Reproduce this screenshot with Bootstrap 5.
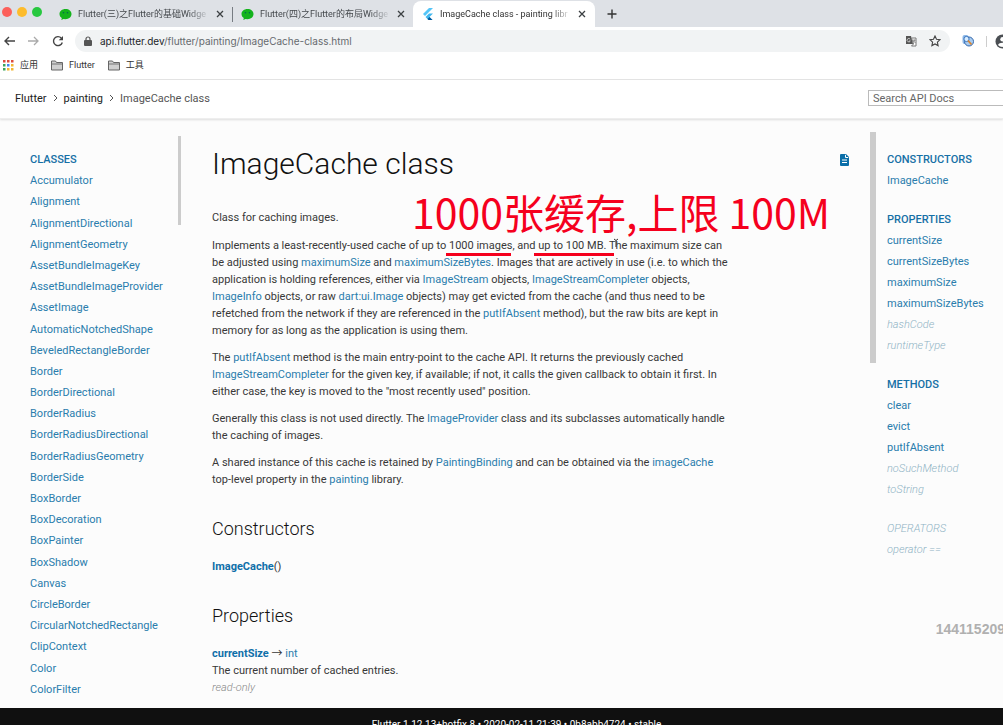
<!DOCTYPE html>
<html lang="en">
<head>
<meta charset="utf-8">
<meta name="viewport" content="width=device-width, initial-scale=1">
<title>ImageCache class - painting library - Dart API</title>
<link href="https://cdn.jsdelivr.net/npm/bootstrap@5.3.0/dist/css/bootstrap.min.css" rel="stylesheet">
<style>
body{font-family:Roboto,"Noto Sans CJK SC",sans-serif;font-size:11px;line-height:17px;font-weight:400;color:#383838;background:#fcfcfc}
a{color:#2a7dad;text-decoration:none}
svg{display:block;flex:none}
button{border:0;background:none;padding:0;color:#444}
.tabstrip{height:27px;background:#dee1e6;font-size:9px;color:#3c4043}
.lights{gap:5px;padding:7px 17px 0 2px}
.lights button{width:10px;height:10px;border-radius:50%}
.tab-item{width:180px;height:26px;padding:2px 8px 0 8px;gap:6px}
.tab-first{width:173px;padding-left:0}
.tab-item a{color:#45494d;overflow:hidden;white-space:nowrap;flex:1;-webkit-mask-image:linear-gradient(90deg,#000 84%,transparent)}
.tab-sep{border-right:1px solid #777c82;height:15px;margin-top:7px}
.tab-live{background:#fff;border-radius:8px 8px 0 0;width:182px;height:26px;margin-top:1px;padding:0 9px 0 10px}
.tab-live a{color:#333}
.toolbar{height:27px;background:#fff;overflow:hidden;padding-top:1px}
.nav-buttons{gap:13px;padding:0 11px 0 4px}
.address{background:#f1f3f4;border-radius:11px;height:22px;padding:0 9px;gap:8px}
.url{font:400 10px/17px Inter,sans-serif;color:#666a6e}
.bookmarks{height:26px;background:#fff;border-bottom:1px solid #e4e4e4;font-size:9px;gap:13px;padding:0 0 3px 3px}
.bookmarks a{color:#333;gap:6px}
.crumbs{height:39px;background:#fff;border-bottom:1px solid #eee;box-shadow:0 1px 2px #ddd;padding:0 0 2px 15px;overflow:hidden}
.crumbs a{color:#222}
.crumbs ol{gap:6px;color:#555}
.search{width:190px;height:16px;margin-right:-55px;border:1px solid #bbb;padding:0 4px;font-size:11px;color:#666}
.search::placeholder{color:#666;opacity:1}
.page-body{overflow:hidden}
.side-left{width:182px;padding:30px 0 0 30px;margin-bottom:15px;overflow:hidden}
.side-left ul{height:calc(100% + 7px)}
.thumb-left{width:3px;height:89px;top:17px;right:1px;background:#ccc}
.side-right{width:133px;padding:30px 0 0 17px}
.thumb-right{width:6px;height:231px;top:13px;left:0;background:#ccc}
.side-right ul{margin-bottom:18px}
.side-right li,.side-left li{line-height:21px;white-space:nowrap}
.side-title{font-weight:500}
.side-title a{color:#1670a6}
.inherited,.inherited a{font-style:italic;font-weight:300;color:#8fb3c4}
.article{padding:23px 21px 0 30px;overflow:hidden}
h1{font-size:30px;line-height:44px;font-weight:300;margin:0;color:#111}
h2{font-size:18px;line-height:26px;font-weight:300;color:#111}
.prose{max-width:520px;padding-top:23px}
.prose p{margin-bottom:10px}
.prose p:first-child{margin-bottom:11px}
.prose h2{margin:28px 0 16px}
.prose dl{margin:0 0 28px}
.prose dt{font-weight:400}
.prose dt b{font-weight:700;color:#0f6fa9}
.prose dd{margin:0}
.prose .read-only{font-style:italic;font-weight:300;color:#888}
.note{left:230px;top:62px;font:400 41px/60px "Noto Sans CJK SC",sans-serif;color:#f5001d;white-space:nowrap}
.rule{height:3px;background:#f5001d;top:134px}
.rule-images{left:264px;width:65px}
.rule-size{left:352px;width:80px}
.caret-mark{left:431px;top:119px}
.stamp{right:-2px;bottom:70px;font:700 14px/18px "Liberation Sans",sans-serif;color:#b0b0b0}
.foot{height:17px;background:#101010;color:#fff;font-size:10px;padding:8px 0 0 30px;overflow:hidden}
</style>
</head>
<body class="vh-100 overflow-hidden d-flex flex-column">
<svg class="d-none">
<symbol id="chat" viewBox="0 0 13 13"><path fill="#14b31c" d="M6.500 1C3 1 .5 3.200.5 6c0 1.800 1 3.200 2.300 4.100L2.300 12l2.200-1.100 2 .3c3.400 0 6-2.300 6-5.200S10 1 6.500 1z"/><circle cx="4.500" cy="4.700" r=".8" fill="#065"/><circle cx="8.500" cy="4.700" r=".8" fill="#065"/></symbol>
<symbol id="close" viewBox="0 0 8 8"><path d="M1 1l6 6M7 1L1 7" stroke="#3c4043" stroke-width="1.300"/></symbol>
<symbol id="folder" viewBox="0 0 12 11"><path d="M.5 10V1h4l1 1.500h6V10z" fill="#d0d0d0" stroke="#666"/><path d="M1 4h10" stroke="#777"/></symbol>
<symbol id="chev" viewBox="0 0 5 8"><path d="M1 1l3 3-3 3" fill="none" stroke="#555"/></symbol>
</svg>
<div class="tabstrip d-flex flex-shrink-0">
<div class="lights d-flex"><button aria-label="Close window" style="background:#fc605b"></button><button aria-label="Minimise" style="background:#fdbc2c"></button><button aria-label="Zoom" style="background:#28c840"></button></div>
<div class="tab-item tab-first d-flex align-items-center"><svg width="13" height="13"><use href="#chat"/></svg><a href="#">Flutter(三)之Flutter的基础Widge</a><button aria-label="Close tab"><svg width="8" height="8"><use href="#close"/></svg></button></div>
<div class="tab-sep"></div>
<div class="tab-item d-flex align-items-center"><svg width="13" height="13"><use href="#chat"/></svg><a href="#">Flutter(四)之Flutter的布局Widge</a><button aria-label="Close tab"><svg width="8" height="8"><use href="#close"/></svg></button></div>
<div class="tab-item tab-live d-flex align-items-center"><svg width="11" height="12" viewBox="0 0 11 12"><path d="M0 6l6-6h4L2 8z" fill="#54c5f8"/><path d="M6 5.500h4L6.500 9l3 3h-4l-3-3z" fill="#41b8ef"/><path d="M4.500 11l2-2 3 3h-4z" fill="#01579b"/></svg><a href="#">ImageCache class - painting libr</a><button aria-label="Close tab"><svg width="8" height="8"><use href="#close"/></svg></button></div>
<button aria-label="New tab" class="ms-2 ps-1"><svg width="10" height="10" viewBox="0 0 10 10"><path d="M5 .5v9M.5 5h9" stroke="#333" stroke-width="1.400"/></svg></button>
</div>
<div class="toolbar d-flex align-items-center flex-shrink-0">
<div class="nav-buttons d-flex">
<button aria-label="Back"><svg width="11" height="12" viewBox="0 -1 11 12"><path d="M11 5H1M5 1L1 5l4 4" fill="none" stroke="#444" stroke-width="1.400"/></svg></button>
<button aria-label="Forward"><svg width="11" height="12" viewBox="0 -1 11 12"><path d="M0 5h10M6 1l4 4-4 4" fill="none" stroke="#aaa" stroke-width="1.300"/></svg></button>
<button aria-label="Reload"><svg width="12" height="12" viewBox="0 0 12 12"><path d="M10.300 7.500a4.500 4.500 0 1 1-1-4.500" fill="none" stroke="#444" stroke-width="1.400"/><path d="M11 1v4.300H6.700z" fill="#444"/></svg></button>
</div>
<div class="address d-flex align-items-center flex-grow-1"><svg width="8" height="10" viewBox="0 0 8 10"><path d="M2 5V3a2 2 0 0 1 4 0v2" fill="none" stroke="#555" stroke-width="1.200"/><rect y="4" width="8" height="6" rx="1" fill="#555"/></svg>
<div class="url flex-grow-1"><span class="text-dark">api.flutter.dev</span>/flutter/painting/ImageCache-class.html</div>
<button aria-label="Translate" class="me-1"><svg width="12" height="12" viewBox="0 0 12 12"><path d="M1 1h5l2 8H1z" fill="#555"/><path d="M6.500 3H11v8H6.500l2-2z" fill="#fff" stroke="#777"/><path d="M5.200 4.200A1.700 1.700 0 1 0 5.300 6H4" stroke="#ddd" fill="none" stroke-width=".8"/><path d="M8 5.200h2.500M9.300 4.500c0 2-.8 2.500-1.300 3M8.500 6l2 2" stroke="#666" fill="none" stroke-width=".7"/></svg></button>
<button aria-label="Bookmark"><svg width="12" height="12" viewBox="0 0 12 12"><path d="M6 1l1.500 3.300 3.500.4-2.600 2.400.7 3.500L6 8.900l-3.100 1.700.7-3.500L1 4.700l3.500-.4z" fill="none" stroke="#444" stroke-width="1.100"/></svg></button></div>
<button aria-label="Extension" class="ms-2 ps-1 me-1"><svg width="12" height="12" viewBox="0 0 12 12"><rect x=".5" width="6" height="9" rx="2" fill="#8db8e8"/><circle cx="7" cy="6.500" r="4.500" fill="#a9ccf0" stroke="#3568ac"/><circle cx="4.500" cy="4" r="2.600" fill="#d8ecff" stroke="#3a75bd"/><path d="M6 5.500l3.500 4" stroke="#d98532" stroke-width="1.800"/></svg></button>
<div class="vr ms-2 me-2 my-2"></div>
<button aria-label="Profile" class="flex-shrink-0" style="margin-right:-7px"><svg width="15" height="15" viewBox="0 0 15 15"><circle cx="7.500" cy="7.500" r="7" fill="#4b4f53"/><circle cx="7.500" cy="5.300" r="2.200" fill="#fff"/><path d="M3 11c1-3 8-3 9 0-2 2.500-7 2.500-9 0z" fill="#fff"/></svg></button>
</div>
<nav class="bookmarks d-flex align-items-center flex-shrink-0" aria-label="Bookmarks">
<a href="#" class="d-flex align-items-center"><svg width="11" height="11" viewBox="0 0 11 11"><path d="M0 0h2.500v2.500H0zM4 0h2.500v2.500H4zM8 0h2.500v2.500H8z" fill="#dd4b3e"/><path d="M0 4h2.500v2.500H0zM0 8h2.500v2.500H0z" fill="#3ca45c"/><path d="M4 4h2.500v2.500H4z" fill="#4285f4"/><path d="M8 4h2.500v2.500H8zM4 8h2.500v2.500H4zM8 8h2.500v2.500H8z" fill="#f2b632"/></svg>应用</a>
<a href="#" class="d-flex align-items-center"><svg width="12" height="11"><use href="#folder"/></svg>Flutter</a>
<a href="#" class="d-flex align-items-center"><svg width="12" height="11"><use href="#folder"/></svg>工具</a>
</nav>
<header class="crumbs d-flex align-items-center justify-content-between flex-shrink-0">
<ol class="list-unstyled d-flex align-items-center mb-0"><li><a href="#">Flutter</a></li><li><svg width="5" height="8"><use href="#chev"/></svg></li><li><a href="#">painting</a></li><li><svg width="5" height="8"><use href="#chev"/></svg></li><li>ImageCache class</li></ol>
<input class="search" type="search" placeholder="Search API Docs" aria-label="Search API Docs">
</header>
<div class="page-body d-flex flex-grow-1 position-relative">
<nav class="side-left position-relative flex-shrink-0" aria-label="Classes"><div class="thumb-left position-absolute"></div>
<ul class="list-unstyled d-flex flex-column justify-content-between mb-0">
<li class="side-title"><a href="#">CLASSES</a></li><li><a href="#">Accumulator</a></li><li><a href="#">Alignment</a></li><li><a href="#">AlignmentDirectional</a></li><li><a href="#">AlignmentGeometry</a></li><li><a href="#">AssetBundleImageKey</a></li><li><a href="#">AssetBundleImageProvider</a></li><li><a href="#">AssetImage</a></li><li><a href="#">AutomaticNotchedShape</a></li><li><a href="#">BeveledRectangleBorder</a></li><li><a href="#">Border</a></li><li><a href="#">BorderDirectional</a></li><li><a href="#">BorderRadius</a></li><li><a href="#">BorderRadiusDirectional</a></li><li><a href="#">BorderRadiusGeometry</a></li><li><a href="#">BorderSide</a></li><li><a href="#">BoxBorder</a></li><li><a href="#">BoxDecoration</a></li><li><a href="#">BoxPainter</a></li><li><a href="#">BoxShadow</a></li><li><a href="#">Canvas</a></li><li><a href="#">CircleBorder</a></li><li><a href="#">CircularNotchedRectangle</a></li><li><a href="#">ClipContext</a></li><li><a href="#">Color</a></li><li><a href="#">ColorFilter</a></li>
</ul></nav>
<main class="article position-relative flex-grow-1">
<div class="d-flex justify-content-between align-items-center"><h1>ImageCache class</h1><a href="#" aria-label="View source" class="pb-2"><svg width="9" height="12" viewBox="0 0 9 12"><path d="M1 0h5l3 3v8a1 1 0 0 1-1 1H1a1 1 0 0 1-1-1V1a1 1 0 0 1 1-1z" fill="#0a6ea8"/><path d="M5.500.8v2.700h2.700M2 6h5M2 8.500h5" fill="none" stroke="#fff"/></svg></a></div>
<div class="prose">
<p>Class for caching images.</p>
<p>Implements a least-recently-used cache of up to 1000 images, and up to 100 MB. The maximum size can be adjusted using <a href="#">maximumSize</a> and <a href="#">maximumSizeBytes</a>. Images that are actively in use (i.e. to which the application is holding references, either via <a href="#">ImageStream</a> objects, <a href="#">ImageStreamCompleter</a> objects, <a href="#">ImageInfo</a> objects, or raw <a href="#">dart:ui.Image</a> objects) may get evicted from the cache (and thus need to be refetched from the network if they are referenced in the <a href="#">putIfAbsent</a> method), but the raw bits are kept in memory for as long as the application is using them.</p>
<p>The <a href="#">putIfAbsent</a> method is the main entry-point to the cache API. It returns the previously cached <a href="#">ImageStreamCompleter</a> for the given key, if available; if not, it calls the given callback to obtain it first. In either case, the key is moved to the "most recently used" position.</p>
<p>Generally this class is not used directly. The <a href="#">ImageProvider</a> class and its subclasses automatically handle the caching of images.</p>
<p>A shared instance of this cache is retained by <a href="#">PaintingBinding</a> and can be obtained via the <a href="#">imageCache</a> top-level property in the <a href="#">painting</a> library.</p>
<h2>Constructors</h2>
<dl><dt><a href="#"><b>ImageCache</b></a>()</dt></dl>
<h2>Properties</h2>
<dl><dt><a href="#"><b>currentSize</b></a> → <a href="#">int</a></dt><dd>The current number of cached entries.</dd><dd class="read-only">read-only</dd></dl>
</div>
<div class="note position-absolute" lang="zh">1000张缓存,上限 100M</div>
<div class="rule rule-images position-absolute"></div><div class="rule rule-size position-absolute"></div>
<svg class="caret-mark position-absolute" width="6" height="10" viewBox="0 0 6 10"><path d="M1 1l2 1.500L5 1M3 2.500V9" fill="none" stroke="#333"/></svg>
</main>
<nav class="side-right position-relative flex-shrink-0" aria-label="Members"><div class="thumb-right position-absolute"></div>
<ul class="list-unstyled"><li class="side-title"><a href="#">CONSTRUCTORS</a></li><li><a href="#">ImageCache</a></li></ul>
<ul class="list-unstyled"><li class="side-title"><a href="#">PROPERTIES</a></li><li><a href="#">currentSize</a></li><li><a href="#">currentSizeBytes</a></li><li><a href="#">maximumSize</a></li><li><a href="#">maximumSizeBytes</a></li><li class="inherited"><a href="#">hashCode</a></li><li class="inherited"><a href="#">runtimeType</a></li></ul>
<ul class="list-unstyled"><li class="side-title"><a href="#">METHODS</a></li><li><a href="#">clear</a></li><li><a href="#">evict</a></li><li><a href="#">putIfAbsent</a></li><li class="inherited"><a href="#">noSuchMethod</a></li><li class="inherited"><a href="#">toString</a></li></ul>
<ul class="list-unstyled"><li class="inherited"><a href="#">OPERATORS</a></li><li class="inherited"><a href="#">operator ==</a></li></ul>
</nav>
<div class="stamp position-absolute">144115209</div>
</div>
<footer class="foot text-center flex-shrink-0">Flutter 1.12.13+hotfix.8 • 2020-02-11 21:39 • 0b8abb4724 • stable</footer>
<script src="https://cdn.jsdelivr.net/npm/bootstrap@5.3.0/dist/js/bootstrap.bundle.min.js"></script>
</body>
</html>
